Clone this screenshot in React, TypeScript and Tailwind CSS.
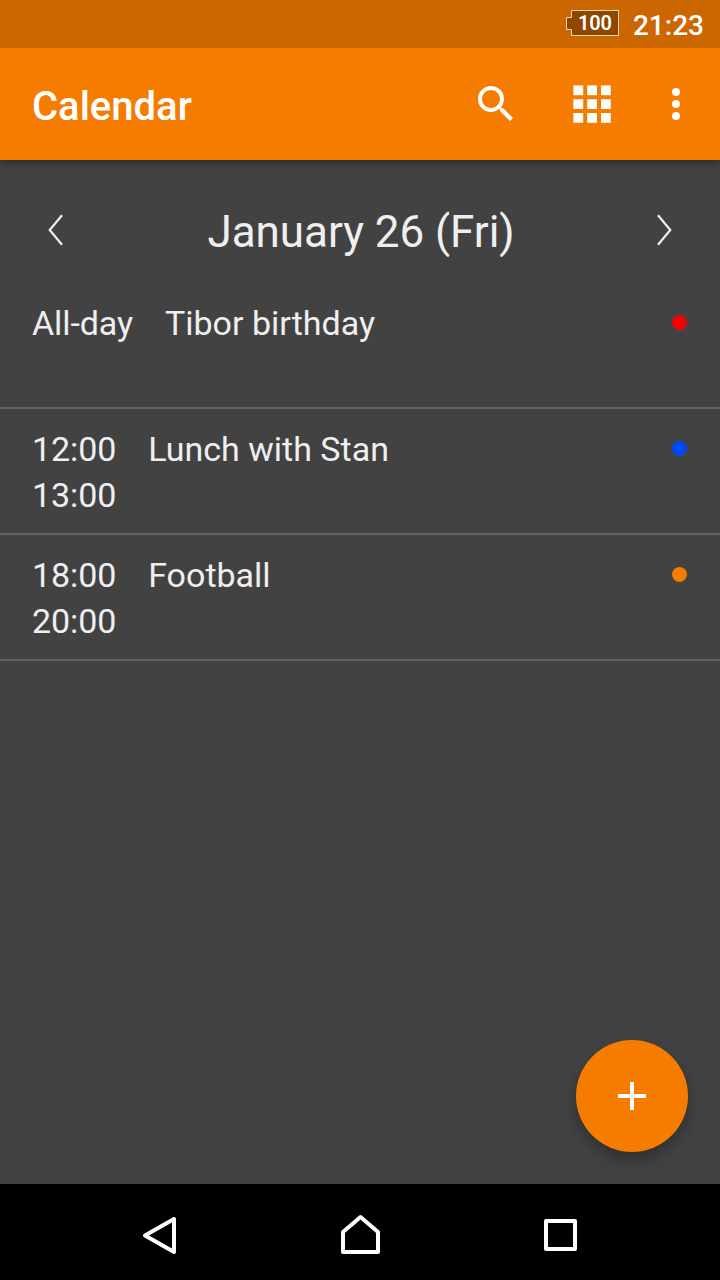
type CalendarEvent = {
  start: string;
  end: string;
  title: string;
  color: string;
};

const events: CalendarEvent[] = [
  { start: 'All-day', end: '', title: 'Tibor birthday', color: 'bg-[#f60000]' },
  { start: '12:00', end: '13:00', title: 'Lunch with Stan', color: 'bg-[#0048f5]' },
  { start: '18:00', end: '20:00', title: 'Football', color: 'bg-[#f57c00]' },
];

function StatusBar() {
  return (
    <div className="z-20 flex h-12 shrink-0 items-center justify-end bg-[#cc6600] pr-4 text-white">
      <div className="relative mb-[2px] h-[26px] w-[53px]">
        <svg className="block" width="53" height="26" viewBox="0 0 53 26" aria-hidden="true">
          <path
            d="M5.5 .5H52.5V25.5H5.5V19.5H.5V7.5H5.5Z"
            fill="#8f4700"
            stroke="#efd5ba"
          />
        </svg>
        <span className="absolute left-[12px] top-[1px] text-[20px] font-semibold leading-6 tracking-[-0.2px]">100</span>
      </div>
      <span className="ml-[14px] pt-[3px] text-[28px] font-medium leading-8">21:23</span>
    </div>
  );
}

function AppBar() {
  return (
    <header className="z-10 flex h-28 shrink-0 items-center bg-[#f57c00] pl-8 pr-5 text-white shadow-[0_2px_8px_rgba(0,0,0,0.4)]">
      <h1 className="flex-1 pt-[6px] text-[40px] font-medium leading-[48px]">Calendar</h1>
      <button className="mr-12 block" aria-label="Search">
        <svg width="48" height="48" viewBox="0 0 24 24" fill="currentColor">
          <path d="M15.5 14h-.79l-.28-.27A6.471 6.471 0 0 0 16 9.5 6.5 6.5 0 1 0 9.5 16c1.61 0 3.09-.59 4.23-1.57l.27.28v.79l5 4.99L20.49 19l-4.99-5zm-6 0C7.01 14 5 11.99 5 9.5S7.01 5 9.5 5 14 7.01 14 9.5 11.99 14 9.5 14z" />
        </svg>
      </button>
      <button className="mr-9 block" aria-label="Change view">
        <svg width="48" height="48" viewBox="0 0 48 48" fill="currentColor">
          {[5.4, 19.2, 33].map((y) =>
            [5.4, 19.2, 33].map((x) => (
              <rect key={`${x}-${y}`} x={x} y={y} width="9.8" height="9.8" />
            )),
          )}
        </svg>
      </button>
      <button className="block" aria-label="More options">
        <svg width="48" height="48" viewBox="0 0 48 48" fill="currentColor">
          <circle cx="24" cy="12" r="4" />
          <circle cx="24" cy="24" r="4" />
          <circle cx="24" cy="36" r="4" />
        </svg>
      </button>
    </header>
  );
}

function DayHeader() {
  return (
    <div className="flex h-[123px] shrink-0 items-center justify-between px-8 pt-[17px]">
      <button className="mb-[1px] block" aria-label="Previous day">
        <svg width="48" height="48" viewBox="0 0 48 48" fill="none" stroke="#efefef" strokeWidth="2.2">
          <path d="M30 9.3 17.7 24 30 38.7" />
        </svg>
      </button>
      <h2 className="mt-[3px] pl-[2px] text-[44px] leading-[52px] tracking-[-0.04px]">January 26 (Fri)</h2>
      <button className="mb-[1px] block" aria-label="Next day">
        <svg width="48" height="48" viewBox="0 0 48 48" fill="none" stroke="#efefef" strokeWidth="2.2">
          <path d="M18 9.3 30.3 24 18 38.7" />
        </svg>
      </button>
    </div>
  );
}

function EventRow({ event }: { event: CalendarEvent }) {
  return (
    <li className="flex h-[126px] border-b-2 border-[#636363] px-8 pt-[17px] text-[34px] leading-[46px]">
      <div className="mr-8 tracking-[-0.1px]">
        <div>{event.start}</div>
        <div>{event.end}</div>
      </div>
      <div className="flex-1">{event.title}</div>
      <span className={`mr-[0.6px] mt-[14.5px] size-[15px] rounded-full ${event.color}`} />
    </li>
  );
}

function NavigationBar() {
  return (
    <nav className="grid h-24 shrink-0 grid-cols-[200px_200px_200px] justify-center bg-black text-white">
      <svg width="200" height="96" viewBox="0 0 200 96" fill="none" stroke="currentColor" strokeWidth="4" strokeLinejoin="round">
        <path d="M85 51.5 114 35V68Z" />
      </svg>
      <svg width="200" height="96" viewBox="0 0 200 96" fill="none" stroke="currentColor" strokeWidth="4" strokeLinejoin="round">
        <path d="M83 68V48L100.5 33 118 48V68Z" />
      </svg>
      <svg width="200" height="96" viewBox="0 0 200 96" fill="none" stroke="currentColor" strokeWidth="4" strokeLinejoin="round">
        <path d="M86 37H115V65H86Z" />
      </svg>
    </nav>
  );
}

export default function App() {
  return (
    <div className="flex h-[1280px] w-[720px] flex-col overflow-hidden bg-[#424242] font-['Roboto',sans-serif] text-[#efefef]">
      <StatusBar />
      <AppBar />
      <main className="relative flex min-h-0 flex-1 flex-col">
        <DayHeader />
        <ul>
          {events.map((event) => (
            <EventRow key={event.title} event={event} />
          ))}
        </ul>
        <button
          className="absolute bottom-8 right-8 flex size-28 items-center justify-center rounded-full bg-[#f57c00] text-white shadow-[0_8px_16px_rgba(0,0,0,0.28)]"
          aria-label="Add event"
        >
          <svg width="48" height="48" viewBox="0 0 48 48" fill="currentColor">
            <path d="M38 26H26V38H22V26H10V22H22V10H26V22H38Z" />
          </svg>
        </button>
      </main>
      <NavigationBar />
    </div>
  );
}
